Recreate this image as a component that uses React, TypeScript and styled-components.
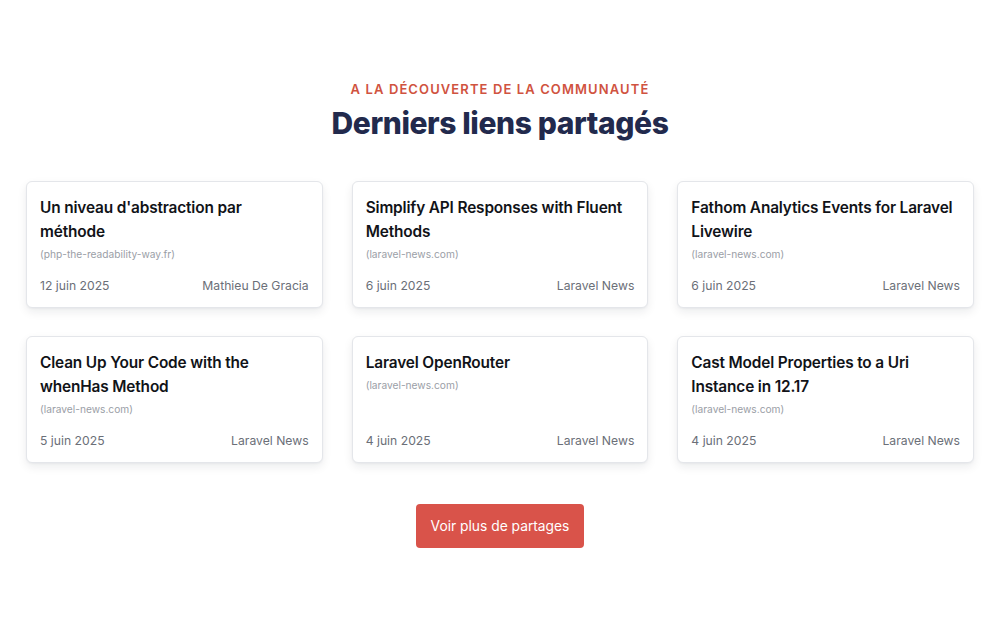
import React from 'react';
import styled, { createGlobalStyle } from 'styled-components';

const LINKS = [
  { title: "Un niveau d'abstraction par méthode", domain: 'php-the-readability-way.fr', date: '12 juin 2025', author: 'Mathieu De Gracia' },
  { title: 'Simplify API Responses with Fluent Methods', domain: 'laravel-news.com', date: '6 juin 2025', author: 'Laravel News' },
  { title: 'Fathom Analytics Events for Laravel Livewire', domain: 'laravel-news.com', date: '6 juin 2025', author: 'Laravel News' },
  { title: 'Clean Up Your Code with the whenHas Method', domain: 'laravel-news.com', date: '5 juin 2025', author: 'Laravel News' },
  { title: 'Laravel OpenRouter', domain: 'laravel-news.com', date: '4 juin 2025', author: 'Laravel News' },
  { title: 'Cast Model Properties to a Uri Instance in 12.17', domain: 'laravel-news.com', date: '4 juin 2025', author: 'Laravel News' },
];

const GlobalStyle = createGlobalStyle`
  * { box-sizing: border-box; }
  body {
    margin: 0;
    background: #fff;
    font-family: Inter, 'Noto Sans', sans-serif;
    -webkit-font-smoothing: antialiased;
  }
`;

export default function App() {
  return (
    <>
      <GlobalStyle />
      <Section>
        <Header>
          <OverTitle>A la découverte de la communauté</OverTitle>
          <Title>Derniers liens partagés</Title>
        </Header>
        <Grid>
          {LINKS.map((link) => (
            <Card key={link.title}>
              <CardTitle>{link.title}</CardTitle>
              <Domain>({link.domain})</Domain>
              <CardFooter>
                <span>{link.date}</span>
                <span>{link.author}</span>
              </CardFooter>
            </Card>
          ))}
        </Grid>
        <MoreButton>Voir plus de partages</MoreButton>
      </Section>
    </>
  );
}

const Section = styled.section`
  display: flex;
  flex-direction: column;
  align-items: center;
  padding: 79px 26px 0;
`;

const Header = styled.div`
  display: flex;
  flex-direction: column;
  align-items: center;
`;

const OverTitle = styled.p`
  margin: 0;
  font-size: 13px;
  line-height: 20px;
  font-weight: 600;
  letter-spacing: 1.1px;
  text-transform: uppercase;
  color: #d0533f;
`;

const Title = styled.h2`
  margin: 4px 0 0;
  font-size: 30px;
  line-height: 40px;
  font-weight: 800;
  letter-spacing: -0.4px;
  color: #222a4d;
`;

const Grid = styled.div`
  display: grid;
  width: 100%;
  grid-template-columns: repeat(3, 1fr);
  gap: 28px 29px;
  margin-top: 38px;
`;

const Card = styled.a`
  display: flex;
  flex-direction: column;
  min-height: 127px;
  padding: 14px 13px 11px;
  background: #fff;
  border: 1px solid #e4e6ea;
  border-radius: 6px;
  box-shadow: 0 4px 10px rgba(15, 23, 42, 0.08), 0 1px 2px rgba(15, 23, 42, 0.04);
  cursor: pointer;
`;

const CardTitle = styled.h3`
  margin: 0;
  font-size: 15.4px;
  line-height: 24px;
  font-weight: 600;
  letter-spacing: -0.15px;
  color: #111318;
`;

const Domain = styled.div`
  margin-top: 3px;
  font-size: 10.2px;
  line-height: 14px;
  color: #9a9ea6;
`;

const CardFooter = styled.div`
  display: flex;
  justify-content: space-between;
  margin-top: auto;
  padding-top: 14px;
  font-size: 12.2px;
  line-height: 20px;
  color: #6b6f78;
`;

const MoreButton = styled.button`
  margin-top: 41px;
  height: 44px;
  padding: 0 15px;
  border: none;
  border-radius: 4px;
  background: #d9534a;
  color: #fff;
  font-family: Inter, 'Noto Sans', sans-serif;
  font-size: 13.8px;
  cursor: pointer;
`;
